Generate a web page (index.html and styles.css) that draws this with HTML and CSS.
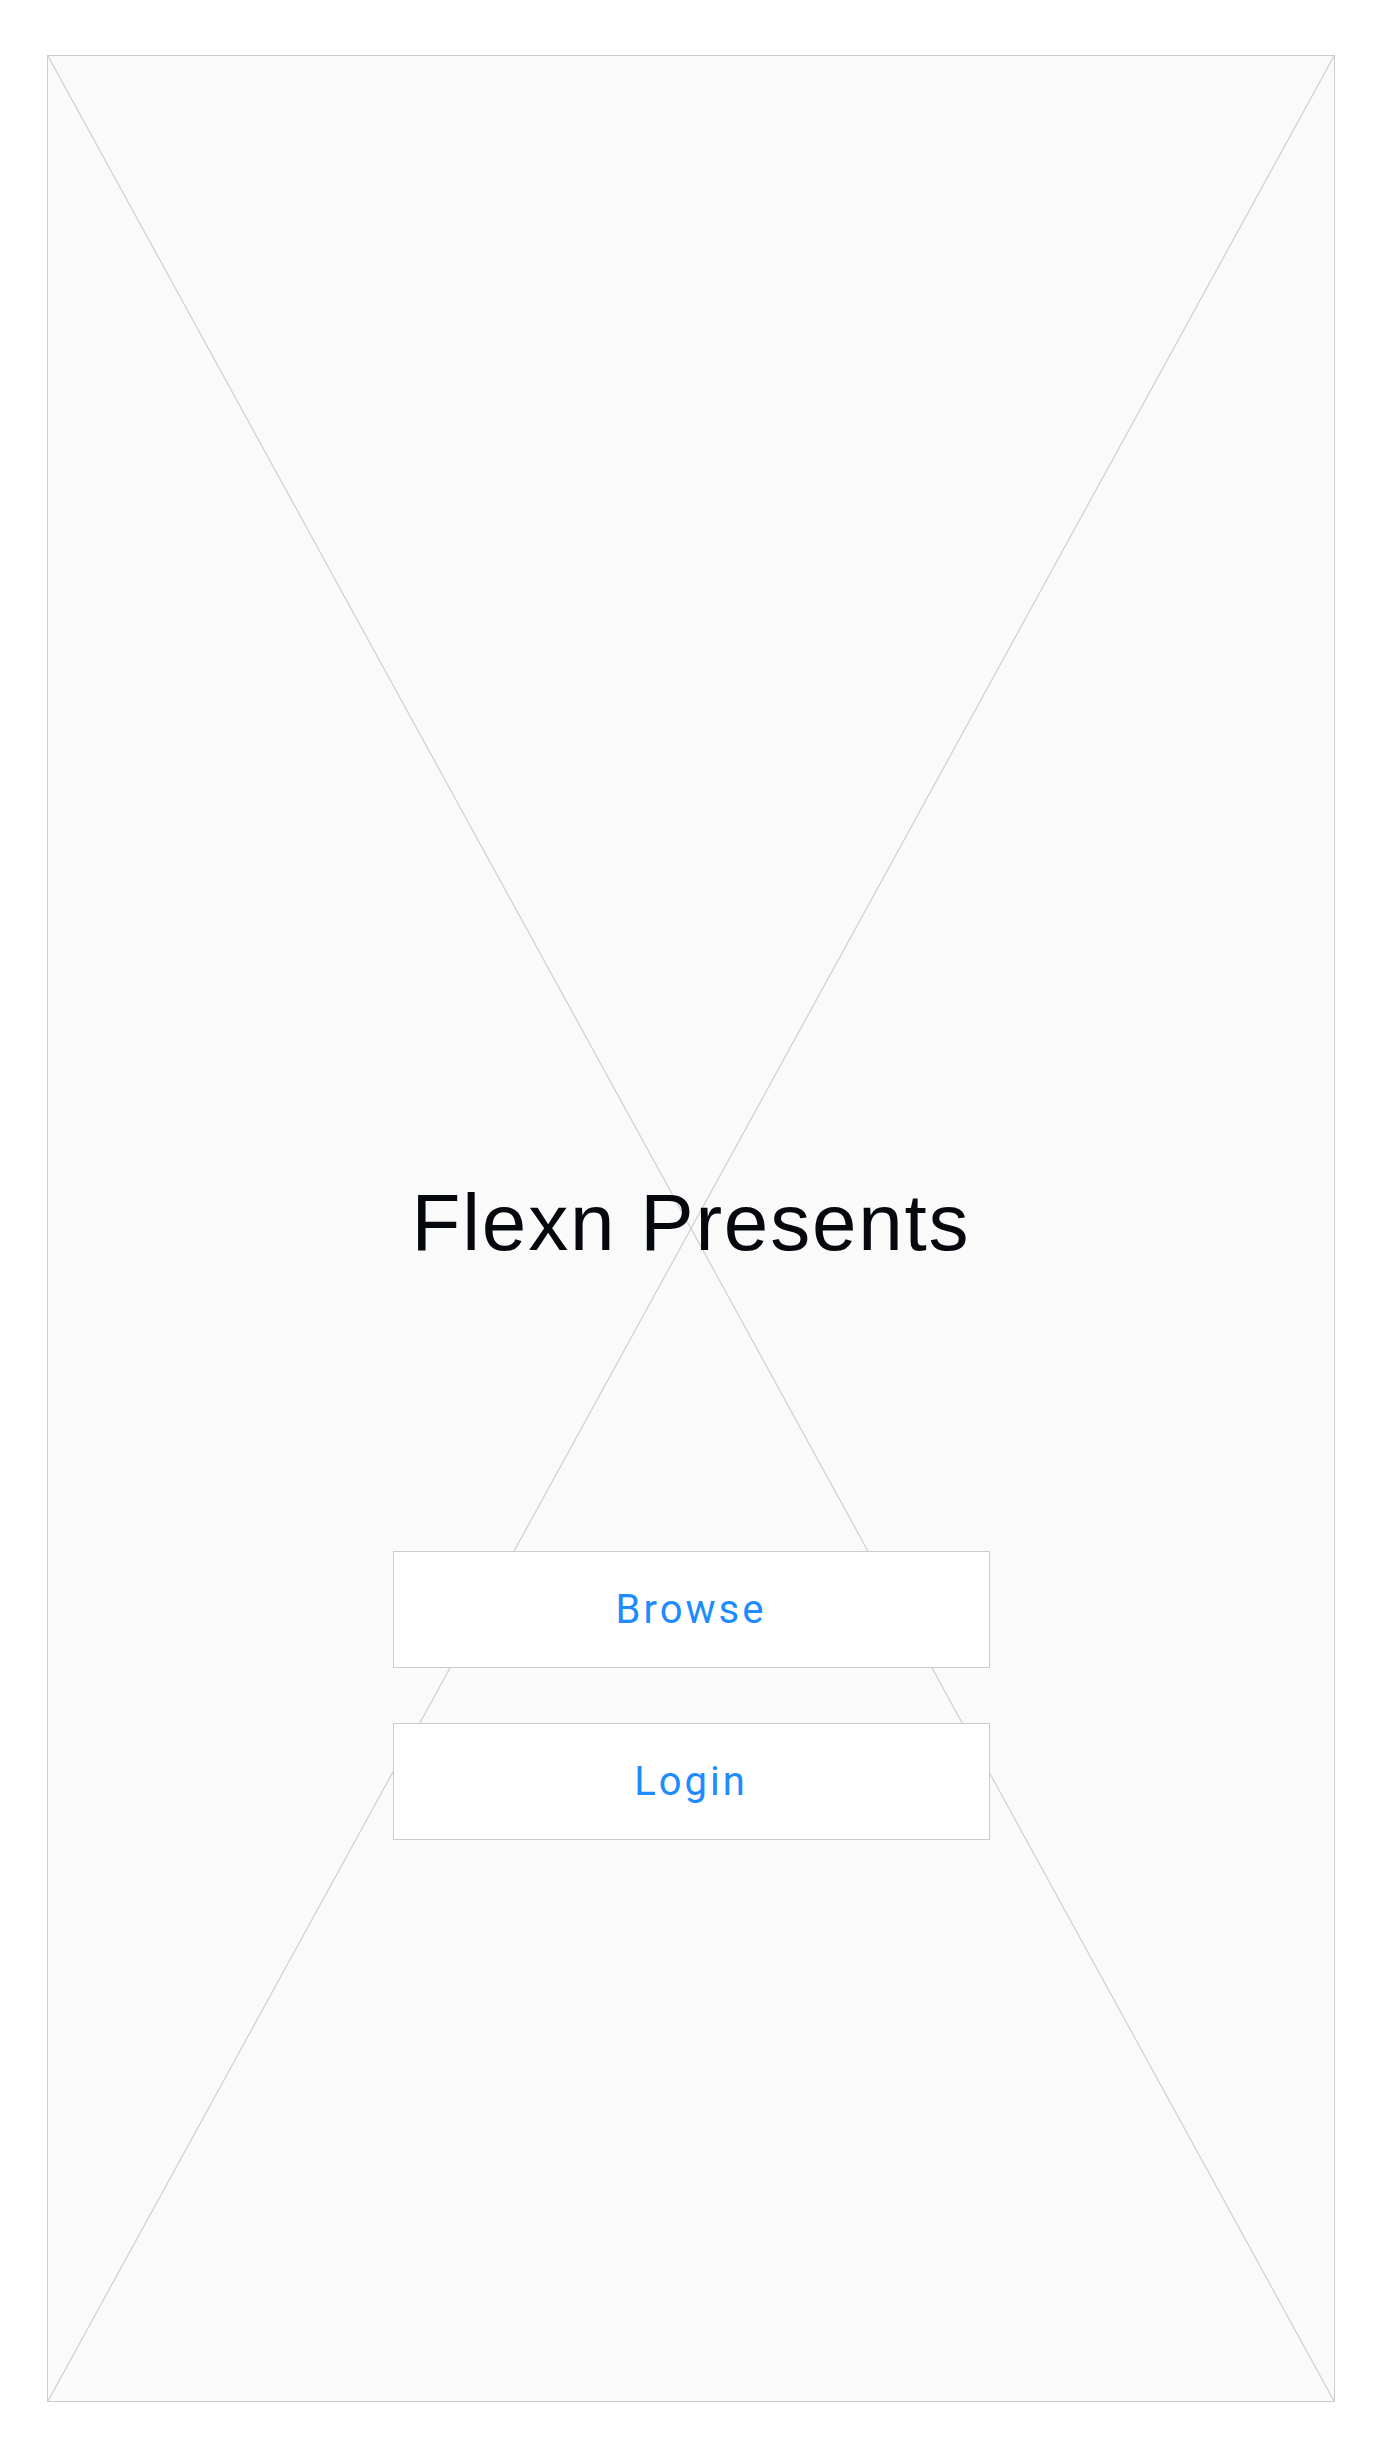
FILE: index.html
```html
<!DOCTYPE html>
<html lang="en">
<head>
<meta charset="utf-8">
<title>Flexn Presents</title>
<link rel="stylesheet" href="styles.css">
</head>
<body>
<div class="page">
  <div class="frame">
    <svg class="cross" viewBox="0 0 100 100" preserveAspectRatio="none" aria-hidden="true">
      <line x1="0" y1="0" x2="100" y2="100" vector-effect="non-scaling-stroke"/>
      <line x1="100" y1="0" x2="0" y2="100" vector-effect="non-scaling-stroke"/>
    </svg>
    <div class="content">
      <h1 class="title">Flexn Presents</h1>
      <div class="actions">
        <button class="btn" type="button">Browse</button>
        <button class="btn" type="button">Login</button>
      </div>
    </div>
  </div>
</div>
</body>
</html>
```

FILE: styles.css
```css
html, body {
  margin: 0;
  padding: 0;
  background: #ffffff;
}

.page {
  padding: 55px 47px;
}

.frame {
  position: relative;
  box-sizing: border-box;
  height: 2347px;
  border: 1px solid #cccccc;
  background: #fafafa;
}

.cross {
  position: absolute;
  left: 0;
  top: 0;
  width: 100%;
  height: 100%;
}

.cross line {
  stroke: #cfcfcf;
  stroke-width: 1.2;
}

.content {
  position: relative;
  display: flex;
  flex-direction: column;
  align-items: center;
}

.title {
  margin: 1127px 0 0;
  font-family: "Liberation Sans", Arial, sans-serif;
  font-weight: 400;
  font-size: 80px;
  line-height: 80px;
  letter-spacing: 1.8px;
  color: #05080c;
}

.actions {
  margin-top: 288px;
  display: flex;
  flex-direction: column;
  align-items: center;
  gap: 55px;
}

.btn {
  box-sizing: border-box;
  width: 597px;
  height: 117px;
  margin: 0;
  padding: 0;
  border: 1px solid #cccccc;
  border-radius: 0;
  background: #ffffff;
  font-family: Roboto, "Noto Sans", sans-serif;
  font-size: 40px;
  font-weight: 400;
  letter-spacing: 3px;
  color: #1e8cff;
  cursor: pointer;
}
```
